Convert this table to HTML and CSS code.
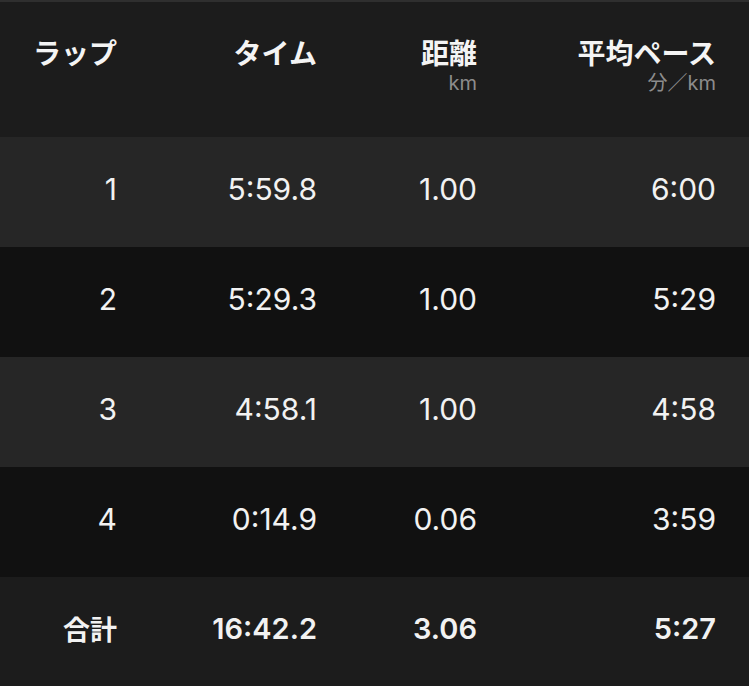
FILE: index.html
```html
<!DOCTYPE html>
<html lang="ja">
<head>
<meta charset="utf-8">
<link rel="stylesheet" href="styles.css">
</head>
<body>
<div class="laps">
  <div class="row head">
    <div class="cell"><span class="title">ラップ</span></div>
    <div class="cell"><span class="title">タイム</span></div>
    <div class="cell"><span class="title">距離</span><span class="unit">km</span></div>
    <div class="cell"><span class="title">平均ペース</span><span class="unit">分／km</span></div>
  </div>
  <div class="row data odd">
    <div class="cell">1</div><div class="cell">5:59.8</div><div class="cell">1.00</div><div class="cell">6:00</div>
  </div>
  <div class="row data even">
    <div class="cell">2</div><div class="cell">5:29.3</div><div class="cell">1.00</div><div class="cell">5:29</div>
  </div>
  <div class="row data odd">
    <div class="cell">3</div><div class="cell">4:58.1</div><div class="cell">1.00</div><div class="cell">4:58</div>
  </div>
  <div class="row data even">
    <div class="cell">4</div><div class="cell">0:14.9</div><div class="cell">0.06</div><div class="cell">3:59</div>
  </div>
  <div class="row data total">
    <div class="cell jp">合計</div><div class="cell">16:42.2</div><div class="cell">3.06</div><div class="cell">5:27</div>
  </div>
</div>
</body>
</html>
```

FILE: styles.css
```css
html, body {
  margin: 0;
  padding: 0;
  background: #1c1c1c;
}
body {
  font-family: "Inter", "Noto Sans CJK JP", sans-serif;
  color: #f2f2f2;
}
.laps {
  width: 749px;
  border-top: 2px solid #2f2f2f;
}
.row {
  display: grid;
  grid-template-columns: 117px 200px 160px 239px;
  padding-right: 33px;
}
.cell {
  display: flex;
  flex-direction: column;
  align-items: flex-end;
  text-align: right;
}
.head {
  height: 135px;
  background: #1c1c1c;
}
.head .cell {
  padding-top: 32px;
}
.title {
  font-family: "Noto Sans CJK JP", sans-serif;
  font-weight: 700;
  font-size: 28px;
  line-height: 36px;
  color: #f4f4f4;
}
.unit {
  font-family: "Inter", "Noto Sans CJK JP", sans-serif;
  font-size: 20px;
  line-height: 26px;
  color: #8c8c8c;
}
.data {
  height: 110px;
  align-items: center;
  font-size: 30px;
  line-height: 36px;
}
.data .cell {
  justify-content: center;
  padding-bottom: 6px;
}
.odd { background: #262626; }
.even { background: #111111; }
.total {
  height: 109px;
  background: #1c1c1c;
  font-weight: 600;
  font-size: 29px;
}
.jp {
  font-family: "Noto Sans CJK JP", sans-serif;
  font-weight: 700;
  font-size: 27px;
}
```
